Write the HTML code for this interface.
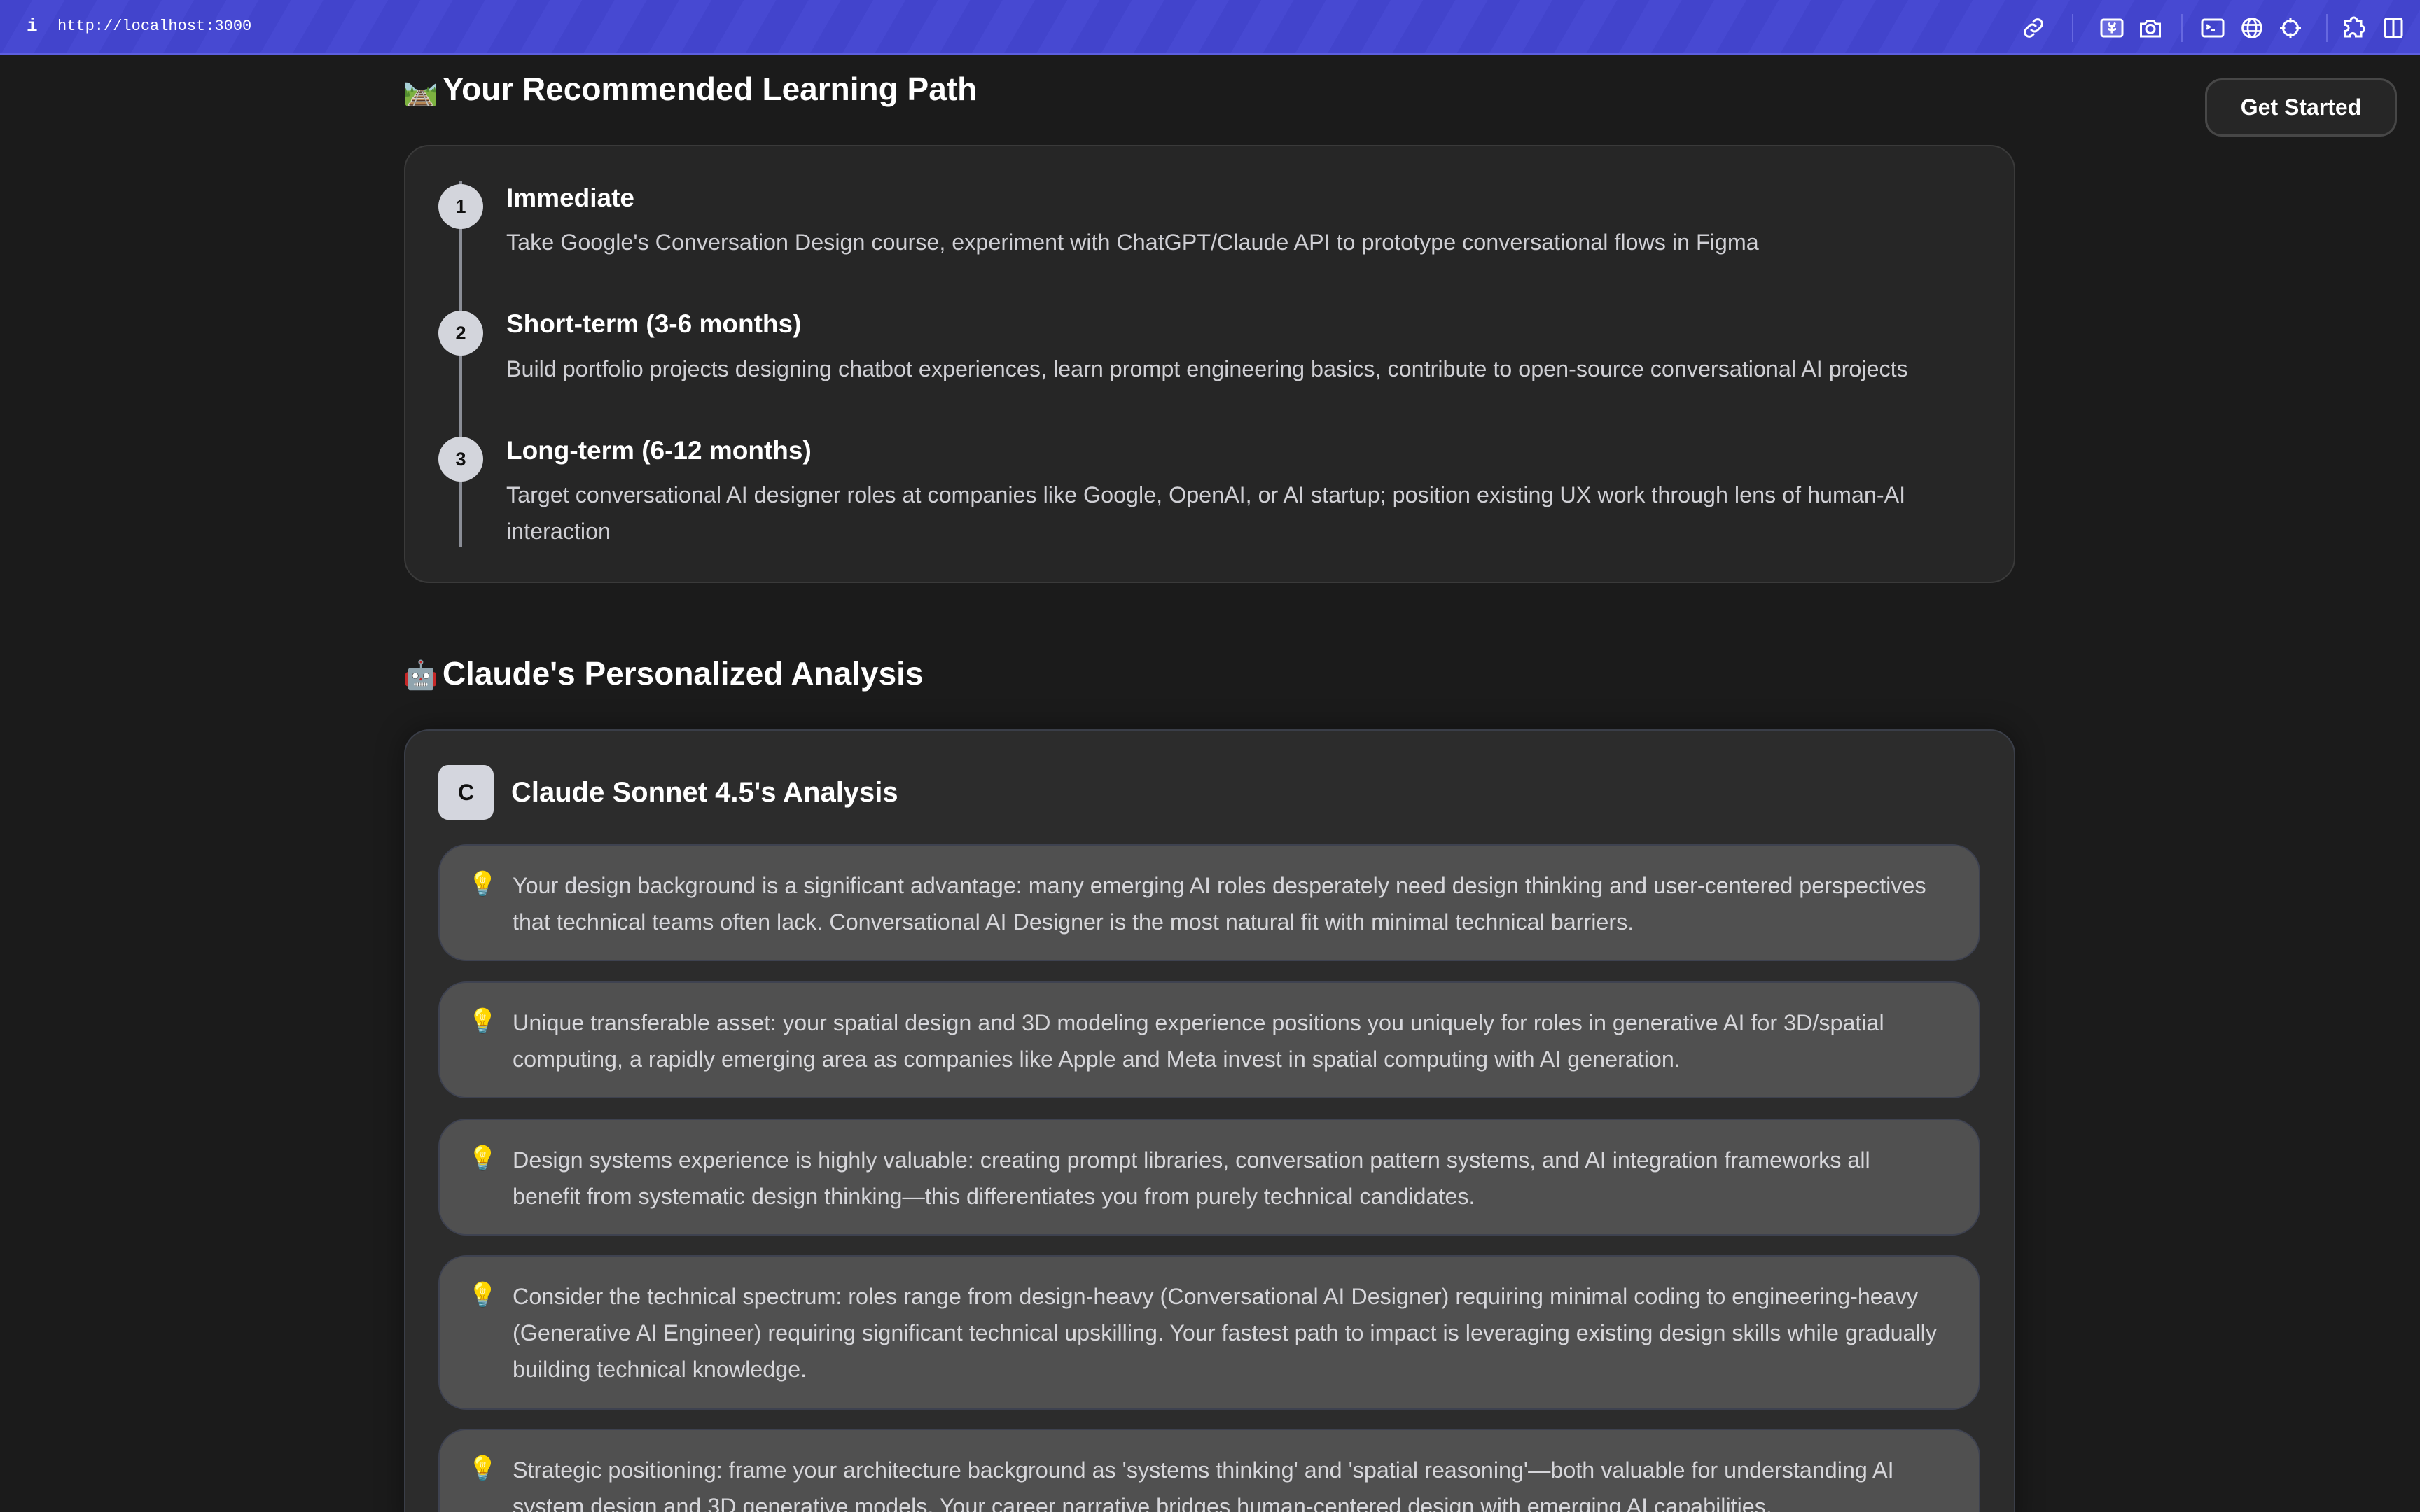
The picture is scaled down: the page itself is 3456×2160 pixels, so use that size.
<!DOCTYPE html>
<html><head><meta charset="utf-8"><style>
*{margin:0;padding:0;box-sizing:border-box}
html,body{width:3456px;height:2160px;overflow:hidden;background:#1b1b1b;font-family:"Liberation Sans",sans-serif;color:#fff;position:relative}
.bar{position:absolute;left:0;top:0;width:3456px;height:79px;background:#4244cc repeating-linear-gradient(120deg,#4244cc 0 40px,#4749d2 40px 80px);border-bottom:3px solid #5d5fe0}
.url{position:absolute;left:82px;top:25px;font:22px "Liberation Mono",monospace;color:#fff}
.info{position:absolute;left:38px;top:22px;font:bold 26px "Liberation Mono",monospace}
.ic{position:absolute;top:22px;width:36px;height:36px}
.sep{position:absolute;top:20px;width:2px;height:40px;background:#6668e0}
.h2{position:absolute;left:576px;font-weight:bold;font-size:46px;white-space:nowrap}
.h2 .e{font-size:40px;margin-right:6px}
.btn{position:absolute;left:3149px;top:112px;width:274px;height:83px;border:3px solid #474747;border-radius:24px;background:#262626;font-size:32px;font-weight:bold;text-align:center;line-height:77px}
.card1{position:absolute;left:577px;top:207px;width:2301px;height:626px;background:#262626;border:2px solid #3a3a3a;border-radius:36px}
.line{position:absolute;left:656px;top:258px;width:4px;height:524px;background:#8a8d96}
.num{position:absolute;left:626px;width:64px;height:64px;border-radius:50%;background:#d3d5dc;color:#111;font-weight:bold;font-size:27px;text-align:center;line-height:64px}
.st{position:absolute;left:723px;font-size:37px;font-weight:bold;white-space:nowrap}
.sd{position:absolute;left:723px;font-size:32.3px;color:#cfcfd4;line-height:52px;white-space:nowrap}
.card2{position:absolute;left:577px;top:1042px;width:2301px;height:1160px;background:#2c2c2c;border:2px solid #3a3e48;border-radius:36px;box-shadow:0 0 40px rgba(0,0,0,.4)}
.av{position:absolute;left:626px;top:1093px;width:79px;height:78px;border-radius:14px;background:#d4d6de;color:#111;font-weight:bold;font-size:32px;text-align:center;line-height:78px}
.box{position:absolute;left:626px;width:2202px;background:#505050;border:2px solid #3e4250;border-radius:40px}
.bulb{position:absolute;left:668px;font-size:34px}
.bt{position:absolute;left:732px;font-size:32.3px;color:#d6d6da;line-height:52px;white-space:nowrap}
</style></head><body>
<div class="bar">
<div class="info">i</div><div class="url">http://localhost:3000</div>
<svg class="ic" style="left:2886px" viewBox="0 0 24 24" fill="none" stroke="#fff" stroke-width="2" stroke-linecap="round"><path d="M10 14a4 4 0 0 0 6 0l3-3a4 4 0 0 0-6-6l-1 1"/><path d="M14 10a4 4 0 0 0-6 0l-3 3a4 4 0 0 0 6 6l1-1"/></svg>
<div class="sep" style="left:2959px"></div>
<svg class="ic" style="left:2998px" viewBox="0 0 24 24" fill="none" stroke="#fff" stroke-width="2"><rect x="2" y="4" width="20" height="16" rx="2" fill="#6a6ce0"/><path d="M12 10v7M8 13c2 0 4 2 4 2s2-2 4-2M9 7l1 3h4l1-3" /></svg>
<svg class="ic" style="left:3053px" viewBox="0 0 24 24" fill="none" stroke="#fff" stroke-width="2"><path d="M3 8h4l2-3h6l2 3h4v12H3z"/><circle cx="12" cy="13" r="4"/></svg>
<div class="sep" style="left:3115px"></div>
<svg class="ic" style="left:3142px" viewBox="0 0 24 24" fill="none" stroke="#fff" stroke-width="2"><rect x="2" y="4" width="20" height="16" rx="2"/><path d="M6 9l3 2-3 2M10 14h4"/></svg>
<svg class="ic" style="left:3198px" viewBox="0 0 24 24" fill="none" stroke="#fff" stroke-width="1.8"><circle cx="12" cy="12" r="9"/><ellipse cx="12" cy="12" rx="4" ry="9"/><path d="M3 9h18M3 15h18"/></svg>
<svg class="ic" style="left:3253px" viewBox="0 0 24 24" fill="none" stroke="#fff" stroke-width="2"><circle cx="12" cy="12" r="7"/><path d="M12 2v5M12 17v5M2 12h5M17 12h5"/></svg>
<div class="sep" style="left:3322px"></div>
<svg class="ic" style="left:3342px;width:42px" viewBox="0 0 24 24" fill="none" stroke="#fff" stroke-width="2"><path d="M8 5a3 3 0 0 1 6 0h4v5a3 3 0 0 1 0 6v4h-5a3 3 0 0 0-6 0H3v-5a3 3 0 0 0 0-6V5z"/></svg>
<svg class="ic" style="left:3400px" viewBox="0 0 24 24" fill="none" stroke="#fff" stroke-width="2"><rect x="4" y="3" width="16" height="18" rx="2"/><path d="M12 3v18"/></svg>
</div>

<div class="h2" style="top:100px"><span class="e">🛤️</span>Your Recommended Learning Path</div>
<div class="btn">Get Started</div>

<div class="card1"></div>
<div class="line"></div>
<div class="num" style="top:263px">1</div>
<div class="num" style="top:444px">2</div>
<div class="num" style="top:624px">3</div>
<div class="st" style="top:262px">Immediate</div>
<div class="sd" style="top:320px">Take Google's Conversation Design course, experiment with ChatGPT/Claude API to prototype conversational flows in Figma</div>
<div class="st" style="top:442px">Short-term (3-6 months)</div>
<div class="sd" style="top:501px">Build portfolio projects designing chatbot experiences, learn prompt engineering basics, contribute to open-source conversational AI projects</div>
<div class="st" style="top:623px">Long-term (6-12 months)</div>
<div class="sd" style="top:681px">Target conversational AI designer roles at companies like Google, OpenAI, or AI startup; position existing UX work through lens of human-AI<br>interaction</div>

<div class="h2" style="top:935px"><span class="e">🤖</span>Claude's Personalized Analysis</div>
<div class="card2"></div>
<div class="av">C</div>
<div class="st" style="left:730px;top:1110px;font-size:40px">Claude Sonnet 4.5's Analysis</div>

<div class="box" style="top:1206px;height:167px"></div>
<div class="bulb" style="top:1243px">💡</div>
<div class="bt" style="top:1239px">Your design background is a significant advantage: many emerging AI roles desperately need design thinking and user-centered perspectives<br>that technical teams often lack. Conversational AI Designer is the most natural fit with minimal technical barriers.</div>

<div class="box" style="top:1402px;height:167px"></div>
<div class="bulb" style="top:1439px">💡</div>
<div class="bt" style="top:1435px">Unique transferable asset: your spatial design and 3D modeling experience positions you uniquely for roles in generative AI for 3D/spatial<br>computing, a rapidly emerging area as companies like Apple and Meta invest in spatial computing with AI generation.</div>

<div class="box" style="top:1598px;height:167px"></div>
<div class="bulb" style="top:1635px">💡</div>
<div class="bt" style="top:1631px">Design systems experience is highly valuable: creating prompt libraries, conversation pattern systems, and AI integration frameworks all<br>benefit from systematic design thinking—this differentiates you from purely technical candidates.</div>

<div class="box" style="top:1793px;height:221px"></div>
<div class="bulb" style="top:1830px">💡</div>
<div class="bt" style="top:1826px">Consider the technical spectrum: roles range from design-heavy (Conversational AI Designer) requiring minimal coding to engineering-heavy<br>(Generative AI Engineer) requiring significant technical upskilling. Your fastest path to impact is leveraging existing design skills while gradually<br>building technical knowledge.</div>

<div class="box" style="top:2041px;height:119px;border-bottom:none;border-radius:40px 40px 0 0"></div>
<div class="bulb" style="top:2078px">💡</div>
<div class="bt" style="top:2074px;height:86px;overflow:hidden">Strategic positioning: frame your architecture background as 'systems thinking' and 'spatial reasoning'—both valuable for understanding AI<br>system design and 3D generative models. Your career narrative bridges human-centered design with emerging AI capabilities.</div>
</body></html>
